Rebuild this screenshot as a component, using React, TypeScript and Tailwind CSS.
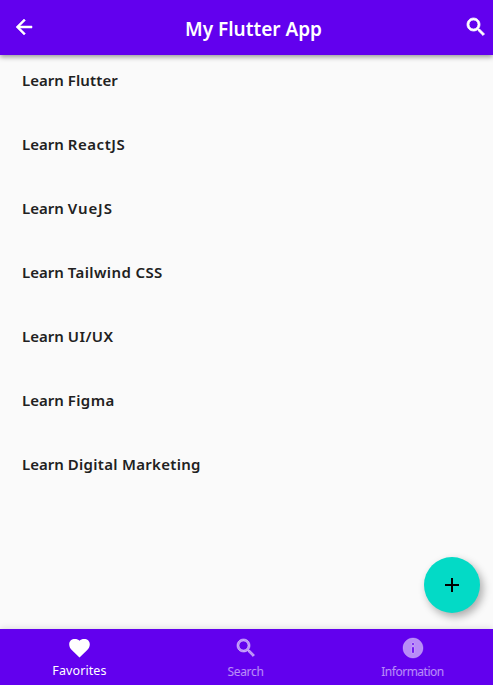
import React from "react";

const tasks = [
  { topic: "Flutter", spacing: "tracking-[0.12px]" },
  { topic: "ReactJS", spacing: "tracking-[0.55px]" },
  { topic: "VueJS", spacing: "tracking-[0.9px]" },
  { topic: "Tailwind CSS", spacing: "tracking-[0.4px]" },
  { topic: "UI/UX", spacing: "tracking-[0.45px]" },
  { topic: "Figma", spacing: "tracking-[0.4px]" },
  { topic: "Digital Marketing", spacing: "tracking-[0.3px]" },
];

const paths = {
  back: "M20 11H7.83l5.59-5.59L12 4l-8 8 8 8 1.41-1.41L7.83 13H20v-2z",
  search:
    "M15.5 14h-.79l-.28-.27C15.41 12.59 16 11.11 16 9.5 16 5.91 13.09 3 9.5 3S3 5.91 3 9.5 5.91 16 9.5 16c1.61 0 3.09-.59 4.23-1.57l.27.28v.79l5 4.99L20.49 19l-4.99-5zm-6 0C7.01 14 5 11.99 5 9.5S7.01 5 9.5 5 14 7.01 14 9.5 11.99 14 9.5 14z",
  heart: "M11.5 21.6 4 14.3C2.4 12.7 1.2 11 1.2 8.3 1.2 4.9 3.7 3 6.8 3c2 0 3.7.5 4.7 1.7C12.5 3.5 14.2 3 16.2 3c3.1 0 5.6 1.9 5.6 5.3 0 2.7-1.2 4.4-2.8 6z",
  info: "M12 2C6.48 2 2 6.48 2 12s4.48 10 10 10 10-4.48 10-10S17.52 2 12 2zm1 15h-2v-6h2v6zm0-8h-2V7h2v2z",
  plus: "M19 13h-6v6h-2v-6H5v-2h6V5h2v6h6v2z",
};

function Icon({ name, weight = 0 }: { name: keyof typeof paths; weight?: number }) {
  return (
    <svg
      viewBox="0 0 24 24"
      fill="currentColor"
      stroke={weight ? "currentColor" : "none"}
      strokeWidth={weight}
      className="size-6 shrink-0"
    >
      <path d={paths[name]} />
    </svg>
  );
}

export default function App() {
  return (
    <div className="relative flex h-[685px] w-[493px] flex-col overflow-hidden bg-[#fafafa] font-['Noto_Sans','Open_Sans',sans-serif]">
      <header className="z-10 grid h-[55px] shrink-0 grid-cols-[1fr_auto_1fr] items-center bg-[#6200ee] pr-[5px] pb-px pl-3 text-white shadow-[0_2px_5px_rgba(0,0,0,0.4)]">
        <button aria-label="Back"><Icon name="back" weight={0.5} /></button>
        <h1 className="pt-[5px] pl-[7px] text-[19px] font-semibold">My Flutter App</h1>
        <button aria-label="Search" className="justify-self-end"><Icon name="search" weight={0.8} /></button>
      </header>
      <main className="flex-1 pt-[9px] pl-[22px]">
        <ul>
          {tasks.map((t) => (
            <li key={t.topic} className="h-16 text-[15px] leading-8 font-semibold text-[#212121]">
              Learn <span className={t.spacing}>{t.topic}</span>
            </li>
          ))}
        </ul>
      </main>
      <button aria-label="Add" className="absolute right-[13px] bottom-[72px] z-10 flex size-14 items-center justify-center rounded-full bg-[#03dac6] text-black shadow-[3px_4px_8px_rgba(0,0,0,0.32)]">
        <Icon name="plus" />
      </button>
      <nav className="flex h-14 shrink-0 bg-[#6200ee] text-white shadow-[0_-1px_6px_rgba(0,0,0,0.12)]">
        <button className="flex w-[159px] flex-col items-center pt-[7px] text-[12.5px] leading-[21px] tracking-[0.1px]">
          <Icon name="heart" />
          Favorites
        </button>
        <button className="flex flex-1 flex-col items-center pt-[7px] text-[12px] leading-6 tracking-[-0.3px] text-white/55">
          <Icon name="search" weight={0.8} />
          Search
        </button>
        <button className="flex w-[161px] flex-col items-center pt-[7px] text-[12px] leading-6 tracking-[-0.5px] text-white/55">
          <Icon name="info" weight={0.4} />
          Information
        </button>
      </nav>
    </div>
  );
}
